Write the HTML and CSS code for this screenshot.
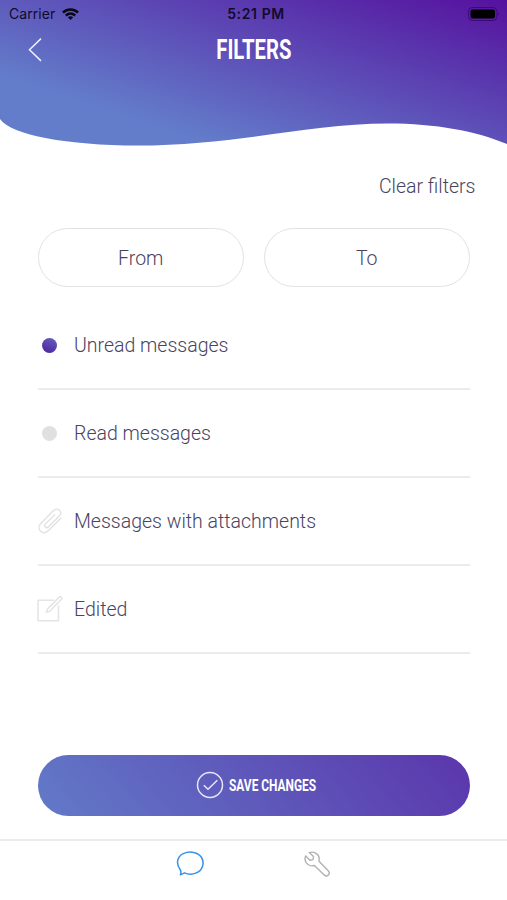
FILE: index.html
```html
<!DOCTYPE html>
<html lang="en">
<head>
<meta charset="utf-8">
<title>Filters</title>
<link rel="stylesheet" href="styles.css">
</head>
<body>
<div class="app">
  <header class="header">
    <svg class="wave" viewBox="0 0 507 150" width="507" height="150" aria-hidden="true">
      <defs>
        <linearGradient id="sky" gradientUnits="userSpaceOnUse" x1="0" y1="76" x2="78" y2="-164">
          <stop offset="0" stop-color="#637dca"/>
          <stop offset="1" stop-color="#54069a"/>
        </linearGradient>
      </defs>
      <path fill="url(#sky)" d="M0 0H507V144C476 131 436 123.500 388 123.500C310 123.500 236 145.500 137 145.500C68 145.500 11 135 0 119Z"/>
    </svg>
    <div class="status">
      <div class="status-left">
        <span class="carrier">Carrier</span>
        <svg width="17" height="12" viewBox="0 0 17 12" fill="none" stroke="#0b0716" stroke-width="2.500" aria-hidden="true">
          <path d="M.9 4.500C5.300.4 11.700.4 16.100 4.500"/>
          <path d="M3.800 7.500C6.700 5 10.300 5 13.200 7.500"/>
          <path fill="#0b0716" stroke="none" d="M8.500 12L5.800 9.300Q8.500 7.200 11.200 9.300Z"/>
        </svg>
      </div>
      <span class="time">5:21 PM</span>
      <div class="status-right">
        <svg width="32" height="14" viewBox="0 0 32 14" aria-hidden="true">
          <rect x=".5" y=".5" width="28.500" height="13" rx="4" fill="none" stroke="#3c087c"/>
          <rect x="2.500" y="2.500" width="24.500" height="9" rx="2" fill="#000"/>
          <path d="M30.300 5Q31.600 7 30.300 9Z" fill="#3c087c"/>
        </svg>
      </div>
    </div>
    <div class="nav">
      <svg class="back" width="16" height="24" viewBox="0 0 16 24" fill="none" stroke="#eeeefa" stroke-width="1.500" aria-hidden="true"><path d="M13 .6L1.500 11.800L13 22.900"/></svg>
      <h1 class="title">FILTERS</h1>
    </div>
  </header>
  <main class="main">
    <a class="clear">Clear filters</a>
    <div class="range">
      <button class="pill">From</button>
      <button class="pill">To</button>
    </div>
    <ul class="list">
      <li class="row"><span class="icon"><i class="dot unread"></i></span>Unread messages</li>
      <li class="row"><span class="icon"><i class="dot"></i></span>Read messages</li>
      <li class="row"><span class="icon">
        <svg width="26" height="26" viewBox="0 0 26 26" fill="none" stroke="#e0e0e0" stroke-width="1.300" stroke-linecap="round" stroke-linejoin="round" aria-hidden="true"><path d="M23.800 10.200L11.500 22.500C9 25 5.800 25.200 3.600 23.200C1.300 20.900 1.600 17.600 4 15.200L16 3C18.200.8 20.500.6 22.500 2.200C24.300 3.800 24.100 6 22.200 8L11.300 19C9.500 20.800 6.300 18.300 8.500 15.900L17.800 6.600"/></svg>
      </span>Messages with attachments</li>
      <li class="row"><span class="icon">
        <svg width="26" height="26" viewBox="0 0 26 26" fill="none" stroke="#e4e4e4" stroke-width="1.500" stroke-linejoin="round" aria-hidden="true"><path d="M17 4.200H1V24.700H21.500V9.500"/><path d="M9.500 16.300L10.600 12.900L22.300 1.100Q23.200.3 24.200 1.200Q25.400 2.300 24.500 3.200L12.900 15.100Z"/></svg>
      </span>Edited</li>
    </ul>
    <button class="save">
      <svg width="28" height="28" viewBox="0 0 28 28" fill="none" stroke="#e8e6fa" stroke-width="1.500" aria-hidden="true"><circle cx="14" cy="14" r="12.500"/><path d="M7.800 14.200L12 18.300L21.300 9.200"/></svg>
      <span class="save-label">SAVE CHANGES</span>
    </button>
  </main>
  <nav class="tabs">
    <svg width="28" height="26" viewBox="0 0 28 26" fill="none" stroke="#3492e8" stroke-width="1.500" stroke-linejoin="round" aria-hidden="true"><path d="M4.400 23.700Q5.500 20.800 4.300 18.800C-.5 12.700 1.300 5.300 7.300 2.600C14-.4 22.300 1.200 25.500 6.500C29 12.300 26.300 19.400 20.300 21.900C16.100 23.700 11.600 23.300 8.500 21.900Q6.600 22.900 4.400 23.700Z"/></svg>
    <svg width="26" height="26" viewBox="0 0 26 26" fill="none" stroke="#b2b2b2" stroke-width="1.400" stroke-linejoin="round" aria-hidden="true"><path d="M5.200 1.600C10-.1 15.400 3.200 15.200 8Q15.200 9 14.800 10L24.200 19.800C27 22.800 23.200 26.500 20.200 23.900L10.400 14.500C5.700 16 1.200 12.600 1 8Q1 6.300 1.700 4.900L6 9.200L9 8.600L9.500 5.600Z"/></svg>
  </nav>
</div>
</body>
</html>
```
FILE: styles.css
```css
* { box-sizing: border-box; }
body { margin: 0; background: #fff; }
.app {
  width: 507px;
  height: 900px;
  display: flex;
  flex-direction: column;
  overflow: hidden;
  font-family: Roboto, "Liberation Sans", sans-serif;
  font-weight: 300;
  color: #49435f;
}
.header { position: relative; height: 150px; flex: none; }
.wave { position: absolute; inset: 0; z-index: 0; }
.status {
  position: relative;
  display: grid;
  grid-template-columns: 1fr auto 1fr;
  align-items: center;
  height: 27px;
  padding: 0 7px 0 9px;
  font: 400 14px Inter, sans-serif;
  color: #120a2c;
}
.status-left { display: flex; align-items: center; gap: 7px; }
.carrier { letter-spacing: .05px; }
.time { font-weight: 600; letter-spacing: .6px; padding-left: 3px; }
.status-right { display: flex; justify-content: flex-end; }
.nav {
  position: relative;
  display: grid;
  grid-template-columns: 1fr auto 1fr;
  align-items: center;
  height: 46px;
  padding: 0 28px;
}
.title {
  grid-column: 2;
  margin: 0;
  color: #fff;
  font-size: 28.5px;
  font-weight: 700;
  line-height: 46px;
  transform: scaleX(.71);
}
.main { height: 689px; padding: 0 37px 0 37.5px; display: flex; flex-direction: column; }
.clear { align-self: flex-end; margin: 24px -5.5px 0 0; font-size: 19.5px; line-height: 26px; }
.range { display: grid; grid-template-columns: 1fr 1fr; gap: 19.5px; margin-top: 28px; }
.pill {
  height: 59px;
  padding: 2px 0 0;
  border: 1px solid #e2e2e2;
  border-radius: 30px;
  background: none;
  font: inherit;
  font-size: 19.5px;
  color: inherit;
}
.list { list-style: none; margin: 15px 0 0; padding: 0; }
.row {
  display: flex;
  align-items: center;
  height: 88px;
  border-bottom: 2px solid #ebebeb;
  font-size: 19.5px;
}
.icon { width: 24px; margin-right: 12.5px; display: flex; justify-content: center; }
.icon svg { flex: none; }
.dot { width: 15px; height: 15px; border-radius: 50%; background: #e0e0e0; }
.unread { background: linear-gradient(200deg, #6760c0, #4c229c); }
.save {
  display: flex;
  align-items: center;
  justify-content: center;
  height: 61px;
  margin-top: 101px;
  padding: 0 0 2px 5px;
  border: 0;
  border-radius: 31px;
  background: linear-gradient(50deg, #627ac8, #5b36ac);
  color: #fff;
}
.save-label {
  width: 88px;
  margin-left: 5px;
  white-space: nowrap;
  text-align: left;
  font: 700 17px Roboto, sans-serif;
  transform: scaleX(.7);
  transform-origin: left;
}
.tabs {
  display: flex;
  justify-content: center;
  align-items: flex-start;
  gap: 100px;
  flex: 1;
  padding: 10px 1px 0 0;
  border-top: 2px solid #ebebeb;
}
```
